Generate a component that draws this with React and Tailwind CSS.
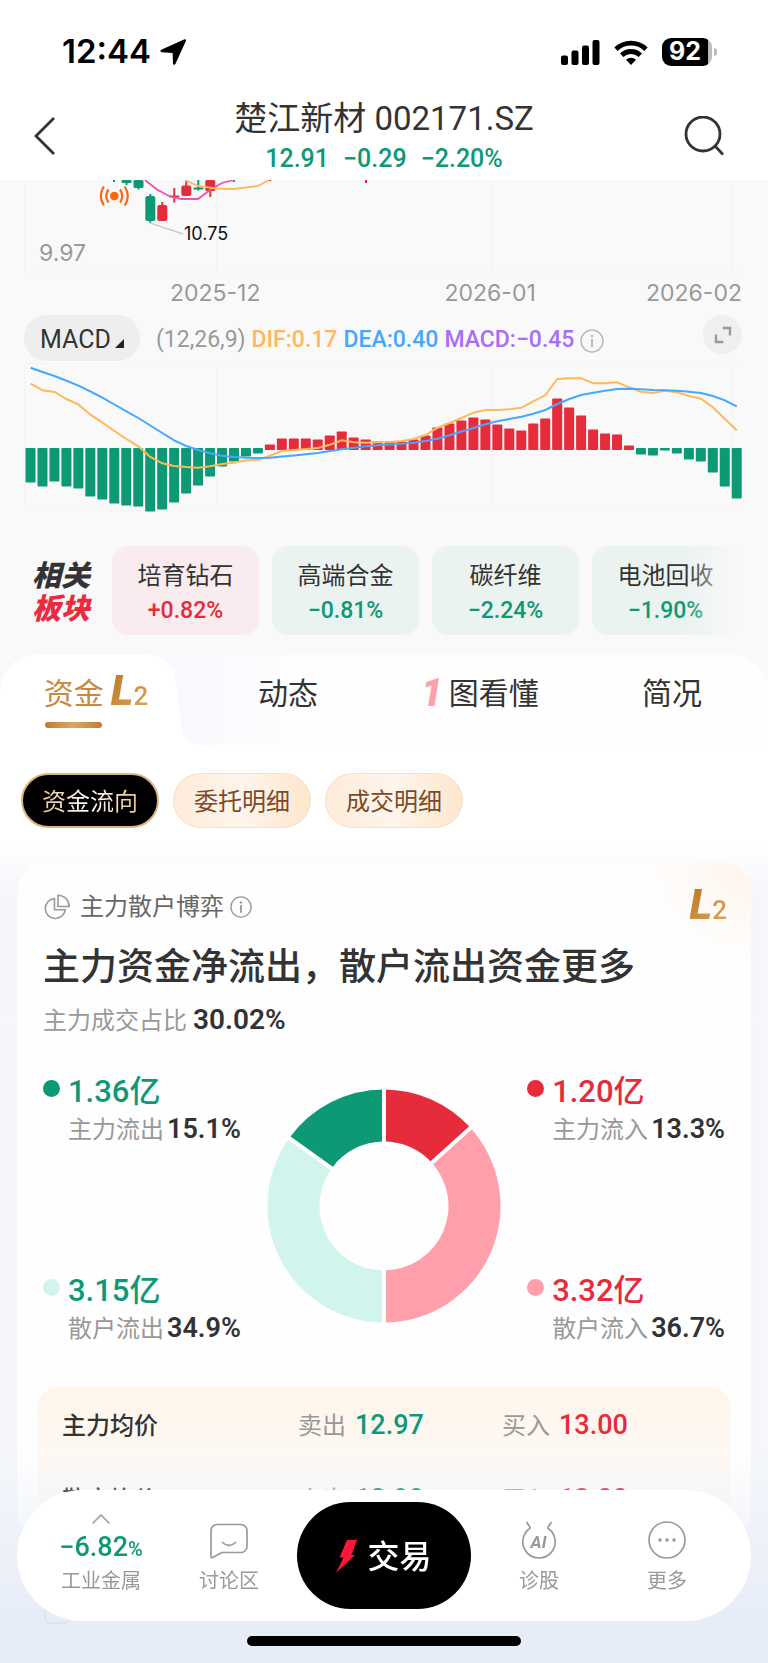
import React from 'react'
import clsx from 'clsx'

const BAR_STEP = 11.97
const ZERO_Y = 88

// MACD histogram, one value per trading day (above zero = red)
const bars = [
  -34, -38, -33, -38, -40, -48, -51, -55, -57, -58, -63, -61, -54, -45, -37, -28, -18, -13, -8, -5,
  5, 11, 11, 11, 10, 14, 18, 12, 10, 8, 8, 8, 10, 14, 22, 26, 29, 32, 30, 25,
  21, 19, 26, 31, 51, 42, 34, 20, 16, 15, 4, -6, -7, -2, -5, -11, -13, -24, -38, -50,
]
const dif = [
  22.7, 29.3, 31, 38, 43.7, 53.7, 61.7, 70, 78, 85.3, 96, 102.3, 105, 106, 106.7, 105.3, 103, 101.7, 99.3, 99,
  94.7, 90, 89, 88, 87, 83.7, 79.3, 81.3, 81.7, 81.3, 81, 80, 78, 74, 66.7, 62, 57, 51.7, 49, 49,
  48.3, 46.7, 40.3, 34.3, 18, 17.3, 17.3, 22.3, 22.3, 21.3, 26.3, 30.7, 32, 29.7, 31.3, 35, 37.7, 46.3, 58, 69.3,
]
const dea = [
  6.7, 11, 15, 19.7, 24.7, 30.5, 36.7, 43.5, 50.3, 57, 64.5, 72, 79.3, 85, 89, 92.3, 94.7, 96, 96.7, 97,
  96.7, 95.5, 94.5, 93.3, 92, 90, 88.3, 86.8, 85.3, 84.2, 83.5, 82.8, 81.7, 80, 77.7, 74.3, 70.5, 67, 63.3, 60.3,
  58, 55.7, 52.7, 49, 43, 38, 34, 31.7, 29.7, 28, 27.7, 28.3, 29, 29.3, 29.7, 30.7, 32, 35, 39.3, 45.3,
]

const toPoints = (values) => values.map((y, i) => `${(30.6 + i * BAR_STEP).toFixed(1)},${y}`).join(' ')

const boards = [
  { name: '培育钻石', change: '+0.82%', up: true },
  { name: '高端合金', change: '−0.81%', up: false },
  { name: '碳纤维', change: '−2.24%', up: false },
  { name: '电池回收', change: '−1.90%', up: false },
]

const segments = [
  { from: 0, to: 13.3, color: '#e62b3b' },
  { from: 13.3, to: 50, color: '#ff9fac' },
  { from: 50, to: 84.9, color: '#d1f5ed' },
  { from: 84.9, to: 100, color: '#0e9976' },
]

const prices = [
  { name: '主力均价', sell: '12.97', buy: '13.00' },
  { name: '散户均价', sell: '12.98', buy: '13.00' },
]

function InfoIcon({ className }) {
  return (
    <svg viewBox="0 0 24 24" className={className} fill="none" stroke="currentColor" strokeWidth="1.5">
      <circle cx="12" cy="12" r="11" />
      <path d="M12 10.5v7" strokeWidth="2" strokeLinecap="round" />
      <circle cx="12" cy="7" r="1.3" fill="currentColor" stroke="none" />
    </svg>
  )
}

function L2Logo() {
  return (
    <span className="flex items-baseline bg-linear-to-br from-[#bd7422] via-[#cf9044] to-[#dba863] bg-clip-text text-transparent">
      <span className="text-[43px] leading-[40px] font-black italic">L</span>
      <span className="text-[26px] leading-[40px] font-medium">2</span>
    </span>
  )
}

function StatusBar() {
  return (
    <div className="flex h-[98px] items-center justify-between pt-1.5 pr-[51px] pl-[62px] text-black">
      <div className="flex items-center gap-2">
        <span className="font-['Inter',sans-serif] text-[33px] font-semibold">12:44</span>
        <svg viewBox="0 0 28 28" className="size-7" fill="currentColor">
          <path d="M25.6 1.3c.9-.4 1.8.5 1.4 1.4L16.4 26c-.5 1.2-2.3 1-2.4-.3L13.6 15 2.6 14.2c-1.3-.1-1.6-1.9-.4-2.4z" />
        </svg>
      </div>
      <div className="flex items-center">
        <svg viewBox="0 0 39 25" className="mr-[14px] h-[25px] w-[39px]" fill="currentColor">
          <rect x="0" y="15.5" width="7" height="9.5" rx="2" />
          <rect x="10.5" y="10.5" width="7" height="14.5" rx="2" />
          <rect x="21" y="5.5" width="7" height="19.5" rx="2" />
          <rect x="31.5" y="0" width="7" height="25" rx="2" />
        </svg>
        <svg viewBox="0 0 34 25" className="mr-[14px] h-[25px] w-[34px]" fill="none" stroke="currentColor" strokeWidth="4.8">
          <path d="M2 9.3a21.5 21.5 0 0 1 30 0" />
          <path d="M7.7 15.2a13.5 13.5 0 0 1 18.6 0" />
          <path d="M17 25l-5-5.3a7.2 7.2 0 0 1 10 0z" fill="currentColor" stroke="none" />
        </svg>
        <div className="flex h-7 w-[50px] items-center justify-center rounded-[9px] bg-linear-to-r from-black from-91% to-[#bcbcbc] to-91% pr-1 font-['Inter',sans-serif] text-[25px] font-bold text-white">
          92
        </div>
        <div className="ml-[2px] h-2 w-[3px] rounded-r-full bg-[#bcbcbc]" />
      </div>
    </div>
  )
}

function Header() {
  return (
    <header className="bg-white">
      <StatusBar />
      <div className="flex h-[82px] justify-between px-8">
        <button type="button" aria-label="返回" className="h-[76px] w-[52px]">
          <svg viewBox="0 0 24 40" className="h-10 w-6" fill="none" stroke="#333" strokeWidth="2.8">
            <path d="M22 2L4 20l18 18" />
          </svg>
        </button>
        <div className="pt-px text-center">
          <h1 className="text-[33px] leading-[40px] text-[#333]">楚江新材 002171.SZ</h1>
          <p className="flex justify-center gap-[14px] text-[25px] leading-[40px] font-medium text-[#0e9976]">
            <span>12.91</span>
            <span>−0.29</span>
            <span>−2.20%</span>
          </p>
        </div>
        <button type="button" aria-label="搜索" className="h-[76px] w-[52px]">
          <svg viewBox="0 0 40 40" className="size-10" fill="none" stroke="#333" strokeWidth="2.8">
            <circle cx="19" cy="18" r="17" />
            <path d="M31 30l8 8.5" />
          </svg>
        </button>
      </div>
    </header>
  )
}

function CandleChart() {
  return (
    <svg viewBox="0 0 768 96" className="block w-full">
      <path d="M24.5 0v96M216.5 0v96M492.5 0v96M732.5 0v96M24 86.5h718M24 96h718" stroke="#f4f4f4" />
      <g fill="#0e9976">
        <rect x="113" width="2" height="2" />
        <rect x="121.5" width="10" height="3" rx="1" />
        <rect x="125.5" width="2" height="5" />
        <rect x="133.5" width="10" height="8" rx="1.5" />
        <rect x="137.5" width="2" height="9.5" />
        <rect x="145.3" y="16" width="10" height="25" rx="2" />
        <rect x="149.3" y="14" width="2" height="29" />
        <rect x="193.5" y="7.5" width="10" height="2" />
        <rect x="197.3" width="2" height="10.5" />
        <rect x="233" width="2" height="2" />
      </g>
      <g fill="#e62b3b">
        <rect x="157.3" y="25" width="10" height="16" rx="2" />
        <rect x="161.3" y="22" width="2" height="6" />
        <rect x="169.3" y="15.5" width="10" height="2" />
        <rect x="173.3" y="8" width="2" height="14.5" />
        <rect x="181.3" y="5.5" width="10" height="10.5" rx="2" />
        <rect x="185.3" y="1" width="2" height="6" />
        <rect x="205.3" width="10" height="11" rx="1.5" />
        <rect x="209.3" width="2" height="17" />
        <rect x="269" width="2" height="1" />
        <rect x="365" width="2" height="3" />
      </g>
      <path d="M145 0l12 9.5 12 6.5 12 3h17l12-9 12-7 12-3" fill="none" stroke="#f152a8" strokeWidth="1.8" />
      <path d="M185 0l13 6 18 2.5 18 .5 24-3 11-6" fill="none" stroke="#fdb95c" strokeWidth="1.8" />
      <path d="M150 43l33 11" stroke="#ccc" strokeWidth="1.5" />
      <g fill="none" stroke="#fe6510" strokeWidth="2.2">
        <circle cx="114.3" cy="16" r="4.3" fill="#fe6510" stroke="none" />
        <path d="M108.5 9.5q-4.5 6.5 0 13M120 9.5q4.5 6.5 0 13M103.8 6.5q-6 9.5 0 19M124.8 6.5q6 9.5 0 19" />
      </g>
      <text x="184" y="60" className="font-['Inter',sans-serif] text-[18px]" fill="#111">10.75</text>
      <text x="39" y="81" className="font-['Inter',sans-serif] text-[23px]" fill="#999">9.97</text>
    </svg>
  )
}

function MacdChart() {
  return (
    <svg viewBox="0 0 768 154" className="block w-full">
      <path d="M24.5 2v148M216.5 2v148M492.5 2v148M732.5 2v148M24 2.5h718M24 149.5h718" stroke="#f4f4f4" />
      {bars.map((value, i) => (
        <rect
          key={i}
          x={25.5 + i * BAR_STEP}
          y={value > 0 ? ZERO_Y + 0.5 - value : ZERO_Y - 1}
          width="10"
          height={Math.abs(value) + 0.5}
          rx="0.8"
          fill={value > 0 ? '#e62b3b' : '#0e9976'}
        />
      ))}
      <polyline points={toPoints(dif)} fill="none" stroke="#fdb95c" strokeWidth="2" />
      <polyline points={toPoints(dea)} fill="none" stroke="#46a7fe" strokeWidth="2" />
    </svg>
  )
}

function ChartSection() {
  return (
    <section>
      <CandleChart />
      <div className="flex h-[34px] items-center pr-[26px] pl-[170px] font-['Inter',sans-serif] text-[23px] text-[#999]">
        <span>2025-12</span>
        <span className="ml-[184px]">2026-01</span>
        <span className="ml-auto">2026-02</span>
      </div>
      <div className="mt-[5px] flex h-[46px] pr-[26px] pl-6">
        <button type="button" className="flex h-full w-[116px] items-center justify-center gap-1 rounded-full bg-[#eee] pt-[3px] text-[25px] text-[#333]">
          MACD
          <svg viewBox="0 0 9 9" className="mt-2 size-[9px]" fill="#222">
            <path d="M9 0v9H0z" />
          </svg>
        </button>
        <div className="ml-4 flex items-center gap-1.5 pt-[5px] text-[23px] font-medium">
          <span className="font-normal text-[#999]">(12,26,9)</span>
          <span className="text-[#fdb95c]">DIF:0.17</span>
          <span className="text-[#46a7fe]">DEA:0.40</span>
          <span className="text-[#a66efb]">MACD:−0.45</span>
          <InfoIcon className="size-6 text-[#bbb]" />
        </div>
        <button type="button" aria-label="全屏" className="ml-auto flex size-[39px] items-center justify-center rounded-full bg-[#efefef]">
          <svg viewBox="0 0 18 18" className="size-[18px]" fill="none" stroke="#999" strokeWidth="2.4">
            <path d="M9 2h7v7.5M2 8.5V16h7.5" />
          </svg>
        </button>
      </div>
      <MacdChart />
    </section>
  )
}

function RelatedBoards() {
  return (
    <section className="relative mt-[31px] flex h-[89px] items-center overflow-hidden pl-8">
      <h2 className="w-20 shrink-0 pt-1 text-[29px] leading-[33px] font-black text-[#333] italic">
        相关
        <br />
        <span className="text-[#eb2a40]">板块</span>
      </h2>
      <div className="flex gap-[13px]">
        {boards.map((board) => (
          <a
            key={board.name}
            href="#board"
            className={clsx(
              'flex h-[89px] w-[147px] shrink-0 flex-col items-center justify-center rounded-2xl pt-1.5',
              board.up ? 'bg-[#f9ebee]' : 'bg-[#ebf3f1]',
            )}
          >
            <span className="text-[24px] leading-[34px] text-[#333]">{board.name}</span>
            <span className={clsx('text-[23px] leading-[36px] font-medium', board.up ? 'text-[#e62b3b]' : 'text-[#0e9976]')}>
              {board.change}
            </span>
          </a>
        ))}
      </div>
      <div className="absolute inset-y-0 right-[26px] w-14 bg-linear-to-r from-[#f9f9f9]/0 to-[#f9f9f9]" />
    </section>
  )
}

function Tabs() {
  return (
    <nav className="relative grid h-[90px] grid-cols-4 overflow-hidden rounded-t-[36px] bg-linear-to-r from-[#f7f9fd] from-22% via-[#fbfcfe] via-32% to-[#fefefe] to-40% text-[30px] text-[#333]">
      <svg viewBox="0 0 200 90" className="absolute top-0 left-0 h-[90px] w-[200px]" fill="#fff">
        <path d="M0 0h148c17 0 26 12 28 30l4 34c2 15 7 26 19 26H0z" />
      </svg>
      <a href="#funds" className="relative flex h-[76px] items-center justify-center gap-[7px] text-[#c88a3f]">
        资金
        <L2Logo />
        <span className="absolute bottom-[3px] left-[45px] h-1.5 w-[57px] rounded-full bg-linear-to-r from-[#c17c2c] via-[#dba863] to-[#c17c2c]" />
      </a>
      <a href="#news" className="flex h-[76px] items-center justify-center">动态</a>
      <a href="#chart" className="flex h-[76px] items-center justify-center gap-1.5">
        <span className="text-[38px] leading-[40px] font-black text-[#fc9fae] italic">1</span>
        图看懂
      </a>
      <a href="#profile" className="flex h-[76px] items-center justify-center">简况</a>
    </nav>
  )
}

function FilterPills() {
  const plain =
    'h-[55px] w-[138px] rounded-full border border-[#fbdfc3] bg-linear-to-r from-[#feebd9] via-[#fff5ec] to-[#fde6cd] pt-0.5 text-[24px] text-[#7a4a2a]'
  return (
    <div className="mt-7 flex gap-[14px] px-[21px]">
      <button type="button" className="h-[55px] w-[138px] rounded-full border-2 border-[#ddb67c] bg-black pt-0.5 text-[24px]">
        <span className="bg-linear-to-r from-[#e9c48e] via-white to-[#e9c48e] bg-clip-text text-transparent">资金流向</span>
      </button>
      <button type="button" className={plain}>委托明细</button>
      <button type="button" className={plain}>成交明细</button>
    </div>
  )
}

function Flow({ dot, color, amount, label, percent }) {
  return (
    <div className="flex">
      <span className={clsx('mt-2 mr-2 size-[17px] rounded-full', dot)} />
      <div>
        <p className={clsx('text-[31px] leading-[40px] font-medium', color)}>{amount}</p>
        <p className="text-[24px] leading-[36px] text-[#999]">
          {label}
          <span className="ml-[3px] text-[27px] leading-none font-semibold text-[#333]">{percent}</span>
        </p>
      </div>
    </div>
  )
}

const ringPoint = (percent, radius) => {
  const angle = (percent / 100) * Math.PI * 2
  return `${117 + radius * Math.sin(angle)} ${117 - radius * Math.cos(angle)}`
}

function Donut() {
  return (
    <svg viewBox="0 0 234 234" className="mt-[17px] size-[234px]">
      {segments.map(({ from, to, color }) => (
        <path
          key={color}
          d={`M${ringPoint(from, 116.5)}A116.5 116.5 0 0 1 ${ringPoint(to, 116.5)}L${ringPoint(to, 64.5)}A64.5 64.5 0 0 0 ${ringPoint(from, 64.5)}z`}
          fill={color}
        />
      ))}
      {segments.map(({ from }) => (
        <path key={from} d={`M117 117L${ringPoint(from, 119)}`} stroke="#fff" strokeWidth="4" />
      ))}
    </svg>
  )
}

function GameCard() {
  return (
    <article className="mx-[17px] mt-[34px] rounded-[32px] bg-white bg-radial-[at_100%_0%] from-[#fef4ea] to-[#fefefe] to-10% px-[21px] pt-[27px] pb-1">
      <div className="flex h-9 items-center pl-[6px] text-[24px] text-[#666]">
        <svg viewBox="0 0 26 26" className="mr-[10px] size-[26px]" fill="none" stroke="#999" strokeWidth="1.6">
          <path d="M10.5 4.5a10 10 0 1 0 10.7 11.3H10.5z" />
          <path d="M14 1.2v11.3h11.2A11.2 11.2 0 0 0 14 1.2z" />
        </svg>
        主力散户博弈
        <InfoIcon className="ml-1.5 size-[22px] text-[#999]" />
        <span className="ml-auto pr-[3px]"><L2Logo /></span>
      </div>
      <h2 className="mt-[19px] px-[5px] text-[37px] leading-[48px] font-medium text-[#333]">主力资金净流出，散户流出资金更多</h2>
      <p className="mt-[11px] px-[5px] text-[24px] leading-[36px] text-[#999]">
        主力成交占比 <span className="text-[28px] leading-none font-semibold text-[#333]">30.02%</span>
      </p>

      <div className="mt-[33px] flex items-start justify-between px-[5px]">
        <div className="flex flex-col gap-[123px]">
          <Flow dot="bg-[#0e9976]" color="text-[#0e9976]" amount="1.36亿" label="主力流出" percent="15.1%" />
          <Flow dot="bg-[#d1f5ed]" color="text-[#0e9976]" amount="3.15亿" label="散户流出" percent="34.9%" />
        </div>
        <Donut />
        <div className="flex flex-col gap-[123px]">
          <Flow dot="bg-[#e62b3b]" color="text-[#e62b3b]" amount="1.20亿" label="主力流入" percent="13.3%" />
          <Flow dot="bg-[#ff9fac]" color="text-[#e62b3b]" amount="3.32亿" label="散户流入" percent="36.7%" />
        </div>
      </div>

      <div className="mt-10 rounded-[20px] bg-linear-to-b from-[#fff5ea] to-[#fcfbfa] to-80% pt-0.5">
        <table className="w-full text-left text-[24px] text-[#999]">
          <tbody>
            {prices.map((row) => (
              <tr key={row.name} className="h-[74px]">
                <th className="w-[260px] pl-6 font-medium text-[#333]">{row.name}</th>
                <td className="w-[204px]">
                  卖出<span className="ml-[9px] text-[27px] leading-none font-medium text-[#0e9976]">{row.sell}</span>
                </td>
                <td>
                  买入<span className="ml-[9px] text-[27px] leading-none font-medium text-[#e62b3b]">{row.buy}</span>
                </td>
              </tr>
            ))}
          </tbody>
        </table>
      </div>
    </article>
  )
}

function NavItem({ label, children }) {
  return (
    <button type="button" className="flex h-full flex-1 flex-col items-center justify-end pb-[25px] text-[20px] leading-[30px] text-[#999]">
      {children}
      {label}
    </button>
  )
}

function BottomBar() {
  return (
    <div className="fixed inset-x-0 bottom-0 bg-linear-to-b from-[#e6ecf7]/0 to-[#e6ecf7]/90 to-75% px-[17px] pt-[37px] pb-[17px]">
      <div className="flex h-[131px] items-center rounded-full bg-white px-5">
        <NavItem label="工业金属">
          <svg viewBox="0 0 18 10" className="mb-2 h-[10px] w-[18px]" fill="none" stroke="#999" strokeWidth="1.5">
            <path d="M.5 9.5L9 1l8.5 8.5" />
          </svg>
          <span className="mb-0.5 text-[27px] font-medium text-[#0e9976]">
            −6.82<span className="text-[20px]">%</span>
          </span>
        </NavItem>
        <NavItem label="讨论区">
          <svg viewBox="0 0 38 36" className="mb-[7px] h-9 w-[38px]" fill="none" stroke="#999" strokeWidth="1.7" strokeLinejoin="round" strokeLinecap="round">
            <path d="M7 1.5h24a6 6 0 0 1 6 6v16a6 6 0 0 1-6 6H12L2.5 34.5q-1.5.5-1.5-1V7.5a6 6 0 0 1 6-6z" />
            <path d="M12.5 19.5q6.5 6 13 0" />
          </svg>
        </NavItem>
        <button type="button" className="mx-1 flex h-[107px] w-[174px] items-center justify-center gap-2.5 rounded-full bg-black pt-0.5 text-[32px] font-medium text-white">
          <svg viewBox="0 0 21 33" className="h-[33px] w-[21px]" fill="#fb1738">
            <path d="M11 0h10l-5.5 15h3.5L0 33l7.5-15.5H3.5z" />
          </svg>
          交易
        </button>
        <NavItem label="诊股">
          <svg viewBox="0 0 36 38" className="mb-[7px] h-[38px] w-9" fill="none" stroke="#999" strokeWidth="1.7">
            <path d="M5.5 1l4 6M30.5 1l-4 6M9.5 7A16.2 16.2 0 1 0 26.5 7" />
            <text x="17.5" y="27" textAnchor="middle" fill="#999" stroke="none" className="text-[17px] font-bold italic">AI</text>
          </svg>
        </NavItem>
        <NavItem label="更多">
          <svg viewBox="0 0 38 38" className="mb-[7px] size-[38px]" fill="none" stroke="#999" strokeWidth="1.7">
            <circle cx="19" cy="19" r="18" />
            <g fill="#999" stroke="none">
              <circle cx="12" cy="19" r="1.7" />
              <circle cx="19" cy="19" r="1.7" />
              <circle cx="26" cy="19" r="1.7" />
            </g>
          </svg>
        </NavItem>
      </div>
      <div className="mx-auto mt-[15px] h-[10px] w-[274px] rounded-full bg-black" />
    </div>
  )
}

export default function App() {
  return (
    <div className="min-h-screen bg-[#f9f9f9] font-['Roboto','Noto_Sans_CJK_SC',sans-serif]">
      <Header />
      <ChartSection />
      <RelatedBoards />

      {/* Detail panel */}
      <main className="mt-5 rounded-t-[36px] bg-white bg-linear-to-b from-white from-[185px] to-[#f5f7fb] to-[240px]">
        <Tabs />
        <FilterPills />
        <GameCard />
        <div className="mt-[52px] flex items-center gap-2.5 px-11 pb-[31px] text-[24px] leading-[36px] text-[#999]">
          <span className="size-[26px] rounded-md border-2 border-[#999]" />
          主力资金
          <InfoIcon className="size-[22px]" />
        </div>
      </main>
      <BottomBar />
    </div>
  )
}
